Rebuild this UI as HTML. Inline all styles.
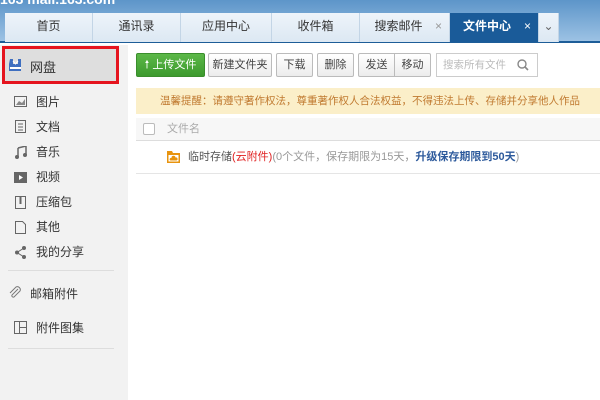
<!DOCTYPE html><html><head><meta charset="utf-8"><style>
*{margin:0;padding:0;box-sizing:border-box}
body{width:600px;height:400px;overflow:hidden;font-family:"Liberation Sans","Noto Sans CJK SC",sans-serif;font-size:12px;color:#333;background:#fff;position:relative}
.hdr{position:absolute;left:0;top:0;width:600px;height:43px;background:linear-gradient(#5d95c9,#9cc2e4);border-bottom:2px solid #1d5d98}
.logo{position:absolute;left:0;top:-9px;color:#fff;font-size:14px;font-weight:bold}
.tab{position:absolute;top:13px;height:29px;background:linear-gradient(#eef4fa,#dce8f3);border-right:1px solid #c3d5e6;text-align:center;line-height:27px;font-size:12px;color:#333}
.tab.a{background:#1a5b99;color:#fff;font-weight:bold}
.x{position:absolute;right:7px;top:0;color:#999;font-weight:normal}
.tab.a .x{color:#fff}
.side{position:absolute;left:0;top:45px;width:128px;height:355px;background:#f2f2f2}
.sel{position:absolute;left:2px;top:1px;width:117px;height:38px;border:3px solid #e5141e;background:#dedede}
.it{position:absolute;left:36px;font-size:12px;color:#333}
.ic{position:absolute;left:14px;width:13px;height:13px}
.hr{position:absolute;left:8px;width:106px;height:1px;background:#ddd}
.btn{position:absolute;top:53px;height:24px;border:1px solid #bbb;border-radius:2px;background:linear-gradient(#fff,#ececec);text-align:center;line-height:22px;color:#444;font-size:11px}
.notice{position:absolute;left:136px;top:88px;width:464px;height:26px;background:#fbefc9;color:#c07a30;line-height:26px;padding-left:24px;font-size:10.5px;white-space:nowrap;overflow:hidden}
.th{position:absolute;left:136px;top:118px;width:464px;height:23px;background:#f7f7f7;border-bottom:1px solid #ddd;color:#aaa;line-height:22px;font-size:11px}
.row{position:absolute;left:136px;top:141px;width:464px;height:33px;border-bottom:1px solid #e5e5e5;line-height:32px;font-size:11px;color:#555}
</style></head><body>
<div class="hdr"><div class="logo">163 mail.163.com</div></div>
<div class="tab" style="left:5px;width:88px">首页</div>
<div class="tab" style="left:93px;width:88px">通讯录</div>
<div class="tab" style="left:181px;width:91px">应用中心</div>
<div class="tab" style="left:272px;width:88px">收件箱</div>
<div class="tab" style="left:360px;width:90px;padding-right:12px">搜索邮件<span class="x">×</span></div>
<div class="tab a" style="left:450px;width:89px;padding-right:14px">文件中心<span class="x">×</span></div>
<div class="tab" style="left:539px;width:20px;color:#666">⌄</div>
<div class="side">
<div class="sel"></div>
<svg style="position:absolute;left:8px;top:13px" width="15" height="14"><path d="M2 1h3v5h5V1h3v12H1V6z" fill="#3f6fc0"/><rect x="2" y="9" width="11" height="2" fill="#fff"/><path d="M5 3l2.5 3L10 3" stroke="#fff" fill="none"/></svg>
<div class="it" style="left:30px;top:12px;font-size:13px">网盘</div>
<svg class="ic" style="top:50px"><rect x=".5" y="1.5" width="12" height="10" fill="none" stroke="#666"/><path d="M2 10l3-4 3 2 3-4v6z" fill="#888"/></svg><div class="it" style="top:48px">图片</div>
<svg class="ic" style="top:75px"><rect x="1.5" y=".5" width="10" height="12" fill="none" stroke="#666"/><path d="M4 4h5M4 7h5M4 10h5" stroke="#666"/></svg><div class="it" style="top:73px">文档</div>
<svg class="ic" style="top:101px"><path d="M4 2l8-2v9M4 2v9" stroke="#666" stroke-width="1.5" fill="none"/><circle cx="3" cy="11" r="2" fill="#666"/><circle cx="11" cy="9" r="2" fill="#666"/></svg><div class="it" style="top:98px">音乐</div>
<svg class="ic" style="top:126px"><rect x="0" y="1" width="13" height="11" fill="#666"/><path d="M5 4l4 2.5-4 2.5z" fill="#fff"/></svg><div class="it" style="top:123px">视频</div>
<svg class="ic" style="top:151px"><rect x="1.5" y=".5" width="10" height="12" fill="none" stroke="#666"/><path d="M6.5 1v7" stroke="#666" stroke-width="2"/></svg><div class="it" style="top:148px">压缩包</div>
<svg class="ic" style="top:176px"><path d="M1.5.5h7l3 3v9h-10z" fill="none" stroke="#666"/></svg><div class="it" style="top:173px">其他</div>
<svg class="ic" style="top:201px"><path d="M10 2L3 6.5 10 11" stroke="#666" fill="none"/><circle cx="10" cy="2" r="2" fill="#666"/><circle cx="3" cy="6.5" r="2" fill="#666"/><circle cx="10" cy="11" r="2" fill="#666"/></svg><div class="it" style="top:198px">我的分享</div>
<div class="hr" style="top:225px"></div>
<svg class="ic" style="left:8px;top:241px"><path d="M10 3L4 9a1.5 1.5 0 0 0 2 2l6-6a3 3 0 0 0-4-4L2 7" stroke="#777" fill="none"/></svg><div class="it" style="left:30px;top:240px">邮箱附件</div>
<svg class="ic" style="top:276px"><rect x=".5" y=".5" width="12" height="12" fill="none" stroke="#666"/><path d="M5.5 1v12M5.5 6.5h7" stroke="#666"/></svg><div class="it" style="top:274px">附件图集</div>
<div class="hr" style="top:303px"></div>
</div>
<div class="btn" style="left:136px;width:69px;background:linear-gradient(#5cb848,#3d9a2e);border-color:#3a8e2c;color:#fff">🠕 上传文件</div>
<div class="btn" style="left:208px;width:64px">新建文件夹</div>
<div class="btn" style="left:276px;width:37px">下载</div>
<div class="btn" style="left:317px;width:37px">删除</div>
<div class="btn" style="left:358px;width:37px;border-radius:2px 0 0 2px">发送</div>
<div class="btn" style="left:394px;width:37px;border-radius:0 2px 2px 0">移动</div>
<div style="position:absolute;left:436px;top:53px;width:102px;height:24px;border:1px solid #ccc;color:#bbb;line-height:22px;padding-left:6px;font-size:10.5px">搜索所有文件<svg style="position:absolute;right:8px;top:5px" width="12" height="12"><circle cx="5" cy="5" r="4" stroke="#888" fill="none" stroke-width="1.4"/><path d="M8 8l3 3" stroke="#888" stroke-width="1.6"/></svg></div>
<div class="notice">温馨提醒：请遵守著作权法，尊重著作权人合法权益，不得违法上传、存储并分享他人作品</div>
<div class="th"><span style="position:absolute;left:7px;top:5px;width:12px;height:12px;border:1px solid #bbb;border-radius:2px;background:#fff"></span><span style="position:absolute;left:31px">文件名</span></div>
<div class="row"><svg style="position:absolute;left:31px;top:10px" width="13" height="12"><path d="M0 0h5l1 2h7v10H0z" fill="#e8940f"/><rect x="1.5" y="4" width="10" height="6.5" fill="#fff"/><path d="M3.5 9.5h6a1.5 1.5 0 0 0-1-3 2 2 0 0 0-4 .5 1.3 1.3 0 0 0-1 2.5z" fill="#e8940f"/></svg><span style="position:absolute;left:52px">临时存储<span style="color:#e02020">(云附件)</span><span style="color:#999">(0个文件，保存期限为15天，</span><span style="color:#2d5a9c;font-weight:bold">升级保存期限到50天</span><span style="color:#999">)</span></span></div>
</body></html>
